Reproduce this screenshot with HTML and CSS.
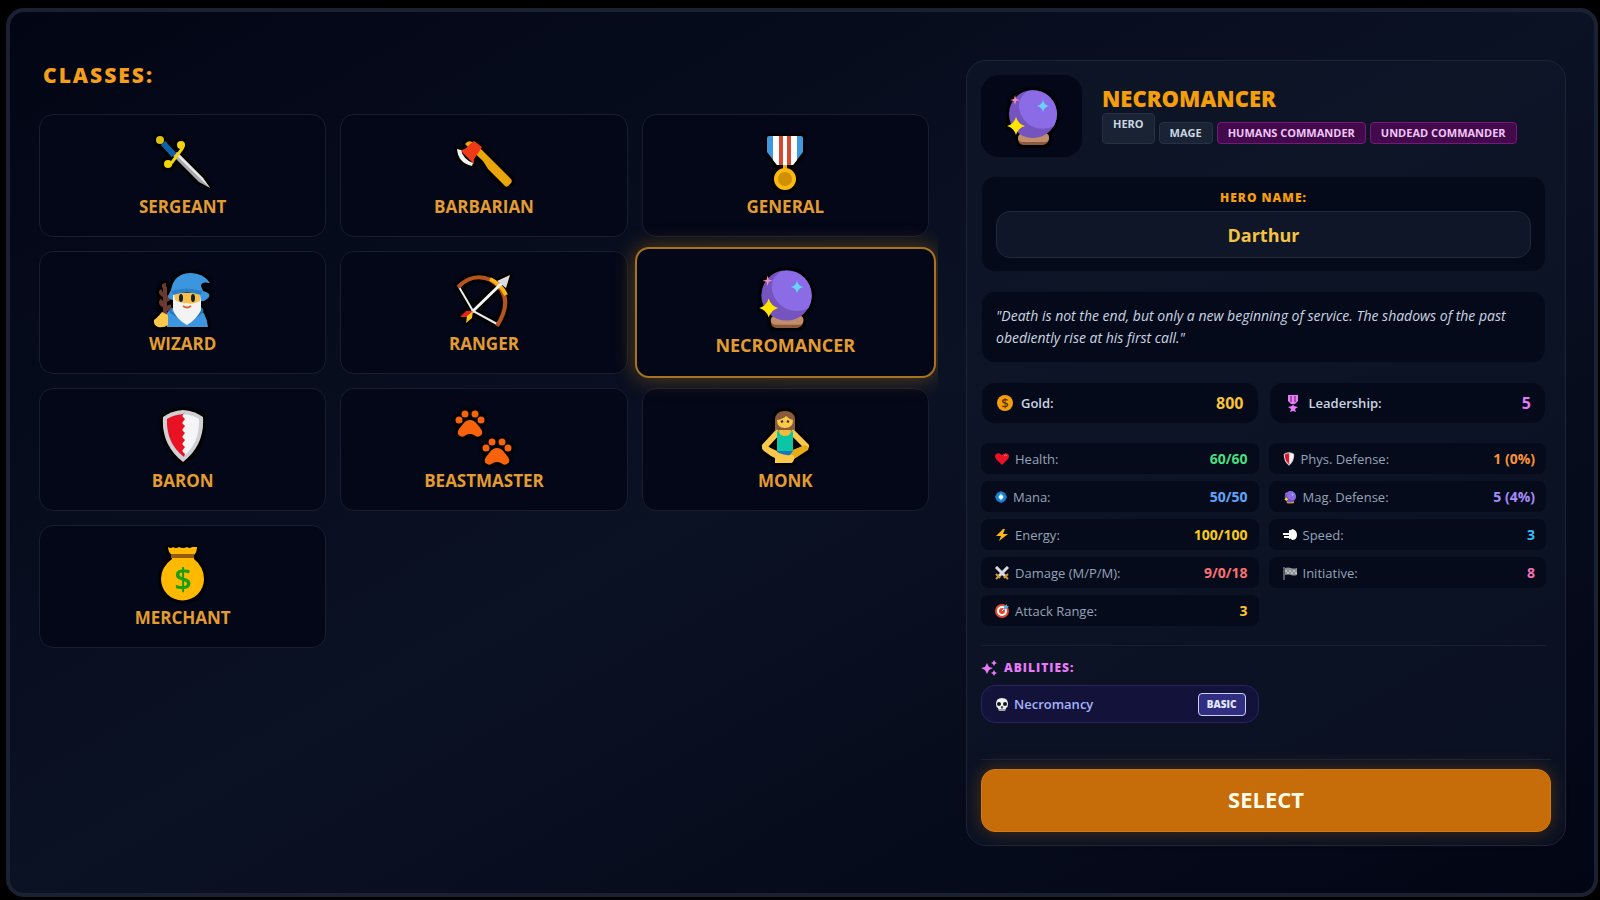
FILE: index.html
```html
<!DOCTYPE html>
<html lang="en">

<head>
    <meta charset="UTF-8">
    <meta name="viewport" content="width=device-width, initial-scale=1.0">
    <title>Choose your hero</title>
    <link rel="stylesheet" href="styles.css">
</head>

<body>
    <!-- icons used more than once -->
    <svg class="sprite" aria-hidden="true">
        <symbol id="ball" viewBox="0 0 60 60">
            <path d="M20 47h23q5 1 4 6t-6 6H21q-5-1-5-6t4-6z" fill="#8b5a3c" />
            <path d="M20 47h23q4 1 4 5t-4 4H20q-4-1-4-4t4-5z" fill="#c28d6c" />
            <circle cx="31" cy="28" r="24" fill="#7554c0" />
            <path d="M26 5a24 24 0 0 1 26 35A24 24 0 0 1 17 22Q16 11 26 5z" fill="#8b6ce6" />
            <path d="M13 9l1 4 4 1-4 1-1 4-1-4-4-1 4-1z" fill="#f58fb8" />
            <path d="M41 14q1 5 6 6-5 1-6 6-1-5-6-6 5-1 6-6z" fill="#66d4ff" />
            <path d="M14 31q2 7 9 9-7 2-9 9-2-7-9-9 7-2 9-9z" fill="#ffe600" />
        </symbol>
        <symbol id="shield" viewBox="0 0 60 60">
            <path d="M30 5q12 1 20 7 2 28-20 45Q8 40 10 12q8-6 20-7z" fill="#cfcfd4" />
            <path d="M30 9q10 1 16 5 1 24-16 38z" fill="#f5f5f7" />
            <path d="M30 9q-10 1-16 5-1 24 17 38l1-3-3-3 3-4-3-3 3-4-3-3 3-4-3-3 3-4-3-3 3-4-3-3 3-4z" fill="#e81224" />
        </symbol>
    </svg>

    <main class="shell">
        <section class="classes">
            <h1>Classes:</h1>
            <div class="class-list">
                <button class="card">
                    <svg viewBox="0 0 60 60">
                        <path d="M20 25l4-4 26 26 7 10-11-6z" fill="#a9a9ad" />
                        <path d="M24 21l26 26 7 10-34-33z" fill="#e8e8ea" />
                        <path d="M10 12l11 12" stroke="#0b63a8" stroke-width="6" />
                        <path d="M14 31q0 4 3 3l12-16q2-4-1-5" fill="none" stroke="#f2d40c" stroke-width="3" />
                        <circle cx="28" cy="14" r="4" fill="#f2d40c" />
                        <circle cx="15" cy="33" r="4" fill="#f2d40c" />
                        <circle cx="7" cy="9" r="4" fill="#dcbf10" />
                    </svg>
                    <span>Sergeant</span>
                </button>
                <button class="card">
                    <svg viewBox="0 0 60 60">
                        <path d="M11 13q3-4 7-2l10 8 12 12 17 17q2 3-1 5-3 4-5 2L34 38l-5-8-14-13z" fill="#eaa50c" />
                        <path d="M20 10l8 6-5 8q-4 3-3 9L6 19q6 0 9-5z" fill="#f03a17" />
                        <path d="M3 18l4 1q2 9 12 13l-1 3Q4 32 3 18z" fill="#f2f2f2" />
                    </svg>
                    <span>Barbarian</span>
                </button>
                <button class="card">
                    <svg viewBox="0 0 60 60">
                        <path d="M30 32v8" stroke="#f5a60c" stroke-width="4" />
                        <path d="M14 5h32q2 0 2 2v14L38 34H22L12 21V7q0-2 2-2z" fill="#3f97dd" />
                        <path d="M18 5h24v24l-4 5H22l-4-5z" fill="#fff" />
                        <path d="M26 5v29M34 5v29" stroke="#d6472f" stroke-width="4" />
                        <circle cx="30" cy="48" r="11" fill="#fdb90f" />
                        <circle cx="30" cy="48" r="7" fill="#d08f06" />
                    </svg>
                    <span>General</span>
                </button>
                <button class="card">
                    <svg viewBox="0 0 60 60">
                        <path d="M12 49V20q-3-3 1-3M12 28q-6-3-3-5M12 32q5 0 4-5M12 38q-6-2-3-6M12 42q5-1 4-5" fill="none" stroke="#6b3a2e" stroke-width="4" />
                        <path d="M14 59V45q4-6 12-6h18q9 4 11 20z" fill="#3c96df" />
                        <path d="M19 40q-3 3 0 5l9 6M48 40q3 3 0 5l-8 6" fill="none" stroke="#2370b8" stroke-width="2" />
                        <path d="M20 26h28v16q-4 9-14 15-11-6-14-15z" fill="#f3f3f3" />
                        <path d="M21 25h26v8q-8 4-13 2-6 1-12-3z" fill="#f7c04d" />
                        <ellipse cx="28" cy="30" rx="2" ry="4" fill="#16202a" />
                        <ellipse cx="40" cy="30" rx="2" ry="4" fill="#16202a" />
                        <path d="M30 38q4 3 8 0" fill="none" stroke="#e0603a" stroke-width="2" />
                        <path d="M15 28l3-6Q21 5 38 5q12 0 19 10-9-2-9 3l2 5q8 2 6 6-4 5-8 4l-1-7q-12-5-27 0v6q-5-1-5-4z" fill="#3c96df" />
                        <path d="M18 23q14-5 31 0l-1 4q-14-5-28 0z" fill="#2a80c8" />
                        <path d="M9 44l6 3v10q-4 3-10 2-5-2-4-7 3-2 8-8z" fill="#fbc94a" />
                    </svg>
                    <span>Wizard</span>
                </button>
                <button class="card">
                    <svg viewBox="0 0 60 60">
                        <path d="M5 19l14 24 24 13" fill="none" stroke="#ececec" stroke-width="2" />
                        <path d="M4 19Q19 4 37 12 62 28 43 58" fill="none" stroke="#b5541c" stroke-width="4" />
                        <path d="M36 11q11 5 16 16" fill="none" stroke="#fdb515" stroke-width="4" />
                        <path d="M18 44l31-30" stroke="#f6f6f6" stroke-width="3" />
                        <path d="M56 7l-4 13-9-7z" fill="#dcdcde" />
                        <path d="M6 49l6-6 7 0-4 6z" fill="#e5231b" />
                        <path d="M12 55l1-7 6-5-1 7z" fill="#fdc21a" />
                    </svg>
                    <span>Ranger</span>
                </button>
                <button class="card selected">
                    <svg><use href="#ball" /></svg>
                    <span>Necromancer</span>
                </button>
                <button class="card">
                    <svg><use href="#shield" /></svg>
                    <span>Baron</span>
                </button>
                <button class="card">
                    <svg viewBox="0 0 60 60">
                        <g id="paw" fill="#f7630c">
                            <path d="M16 15q4 0 7 4l4 5q3 5-1 7-3 2-6-1-4-2-8 0-3 3-6 1-4-2-1-7l4-5q3-4 7-4z" />
                            <circle cx="5" cy="15" r="3.5" />
                            <circle cx="11" cy="9" r="3.5" />
                            <circle cx="21" cy="9" r="3.5" />
                            <circle cx="27" cy="15" r="3.5" />
                        </g>
                        <use href="#paw" x="27" y="28" />
                    </svg>
                    <span>Beastmaster</span>
                </button>
                <button class="card">
                    <svg viewBox="0 0 60 60">
                        <path d="M20 25V14Q21 6 30 6t10 8v11z" fill="#8a5a3c" />
                        <path d="M22 28L10 41M38 28l13 13" stroke="#fbc94a" stroke-width="6" stroke-linecap="round" />
                        <path d="M50 40q5 1 3 5L36 56H22q-2-4 3-6z" fill="#e8ac18" />
                        <path d="M9 39q-4 4 0 7 12 10 28 12 4-5 1-8-14-1-29-11z" fill="#fbc94a" />
                        <path d="M20 51v7h17z" fill="#fbc94a" />
                        <path d="M22 26q8 3 16 0v20H22z" fill="#0bc5a4" />
                        <path d="M22 46h16l-3 4q-6 1-13-3z" fill="#1a76bd" />
                        <path d="M24 25h12q0 6-6 6t-6-6z" fill="#f3b93b" />
                        <path d="M22 15q6-1 9-4 3 3 7 4 0 8-8 8t-8-8z" fill="#fbc94a" />
                        <path d="M26 17l2-1M32 16l2 1" stroke="#3b2a20" stroke-width="2" />
                    </svg>
                    <span>Monk</span>
                </button>
                <button class="card">
                    <svg viewBox="0 0 60 60">
                        <path d="M15 5q3 2 5 0 3 2 6 0 4 2 8 0 3 2 5 0l5 0q0 5-3 8v4q10 8 10 20a21 21 0 0 1-43 0q0-12 11-20v-4q-4-3-4-8z" fill="#ffb900" />
                        <path d="M18 14h23" stroke="#935a12" stroke-width="4" />
                        <text x="30" y="48" text-anchor="middle" class="dollar">$</text>
                    </svg>
                    <span>Merchant</span>
                </button>
            </div>
        </section>

        <section class="details">
            <div class="details-body">
                <header class="hero-head">
                    <div class="portrait"><svg><use href="#ball" /></svg></div>
                    <div class="hero-title">
                        <h2>Necromancer</h2>
                        <div class="tags">
                            <span class="tag tag-hero">Hero</span>
                            <span class="tag">Mage</span>
                            <span class="tag tag-commander">Humans commander</span>
                            <span class="tag tag-commander">Undead commander</span>
                        </div>
                    </div>
                </header>

                <div class="box name-box">
                    <label for="hero-name">Hero name:</label>
                    <input id="hero-name" type="text" value="Darthur">
                </div>

                <p class="box quote">"Death is not the end, but only a new beginning of service. The shadows of the past obediently rise at his first call."</p>

                <div class="pair">
                    <div class="box resource">
                        <svg class="w18" viewBox="0 0 18 18">
                            <circle cx="9" cy="9" r="8" fill="#f59e0b" />
                            <text x="9" y="14" text-anchor="middle" class="coin">$</text>
                        </svg>
                        <span>Gold:</span>
                        <b class="c-gold">800</b>
                    </div>
                    <div class="box resource">
                        <svg class="w18" viewBox="0 0 18 18" fill="#e879f9">
                            <path d="M4 1h10v6l-3 3H7L4 7z" />
                            <path d="M7 2v6M11 2v6" stroke="#5b2267" />
                            <path d="M9 10l1 2 4 1-3 2 1 3-3-1-3 1 1-3-3-2 4-1z" />
                        </svg>
                        <span>Leadership:</span>
                        <b class="c-lead">5</b>
                    </div>
                </div>

                <div class="stats">
                    <div class="stat">
                        <svg class="w14" viewBox="0 0 14 14"><path d="M7 13L1 7Q-1 4 1 2q3-2 6 1 3-3 6-1 2 2 0 5z" fill="#e81224" /><path d="M9 4q2-2 3 0" stroke="#f77" fill="none" /></svg>
                        <span>Health:</span><b class="c-green">60/60</b>
                    </div>
                    <div class="stat">
                        <svg class="w12" viewBox="1 0 12 14"><path d="M7 1l4 2 2 4-2 4-4 2-4-2-2-4 2-4z" fill="#1b7fd0" /><path d="M7 3l3 4-3 4-3-4z" fill="#6cc4f7" /><circle cx="7" cy="7" r="2" fill="#fff" /></svg>
                        <span>Mana:</span><b class="c-blue">50/50</b>
                    </div>
                    <div class="stat">
                        <svg class="w14" viewBox="0 0 14 14"><path d="M8 1L1 8h5l-2 5 9-7H8l2-5z" fill="#fdb71c" /></svg>
                        <span>Energy:</span><b class="c-yellow">100/100</b>
                    </div>
                    <div class="stat">
                        <svg class="w14" viewBox="0 0 14 14"><path d="M1 1l9 9M13 1l-9 9" stroke="#dcdce0" stroke-width="3" /><path d="M1 8l4 4M13 8l-4 4M1 13l3-3M13 13l-3-3" stroke="#d29a2e" stroke-width="2" /></svg>
                        <span>Damage (M/P/M):</span><b class="c-red">9/0/18</b>
                    </div>
                    <div class="stat">
                        <svg class="w14" viewBox="0 0 14 14"><circle cx="7" cy="7" r="7" fill="#e2472f" /><circle cx="7" cy="7" r="5" fill="#fff" /><circle cx="7" cy="7" r="3" fill="#e2472f" /><path d="M7 7l4-4" stroke="#fff" /><path d="M9 3l3-3v2h2l-3 3H9z" fill="#41b3f0" /></svg>
                        <span>Attack Range:</span><b class="c-gold">3</b>
                    </div>
                    <div class="stat">
                        <svg class="w12" viewBox="9 4 42 54"><use href="#shield" width="60" height="60" /></svg>
                        <span>Phys. Defense:</span><b class="c-orange">1 (0%)</b>
                    </div>
                    <div class="stat">
                        <svg class="w14"><use href="#ball" /></svg>
                        <span>Mag. Defense:</span><b class="c-violet">5 (4%)</b>
                    </div>
                    <div class="stat">
                        <svg class="w14" viewBox="0 0 14 14"><path d="M0 6h7M1 9h6" stroke="#f5f5f5" stroke-width="2" /><path d="M6 2q2 1 3-1 5 1 5 6t-5 5q-1-2-3-1z" fill="#fff" /></svg>
                        <span>Speed:</span><b class="c-sky">3</b>
                    </div>
                    <div class="stat">
                        <svg class="w14" viewBox="0 0 14 14"><path d="M1 1v13" stroke="#55585e" stroke-width="2" /><path d="M2 2q3-1 6 0t6 0v7q-3 1-6 0T2 9z" fill="#8d9093" /><path d="M2 4h2v2H2zM6 4h2v2H6zM10 4h2v2h-2zM4 6h2v2H4zM8 6h2v2H8zM12 6h2v2h-2z" fill="#b9bcc0" /></svg>
                        <span>Initiative:</span><b class="c-pink">8</b>
                    </div>
                </div>

                <div class="abilities">
                    <h3>
                        <svg class="w16" viewBox="0 0 16 16" fill="#e879f9"><path d="M6 3l2 4 4 1-4 2-2 4-2-4-4-2 4-1zM13 0l1 2 2 1-2 1-1 2-1-2-2-1 2-1zM13 10l1 2 2 1-2 1-1 2-1-2-2-1 2-1z" /></svg>
                        Abilities:
                    </h3>
                    <div class="pair">
                        <div class="ability">
                            <svg class="w12" viewBox="0 0 12 14"><path d="M6 1q6 0 6 6 0 3-2 4l-1 3H3l-1-3Q0 10 0 7q0-6 6-6z" fill="#f2f2f2" /><circle cx="3" cy="7" r="2" fill="#15151c" /><circle cx="9" cy="7" r="2" fill="#15151c" /><path d="M6 9l1 2H5zM4 12v2M6 12v2M8 12v2" stroke="#55555c" /></svg>
                            <span>Necromancy</span>
                            <b class="level">Basic</b>
                        </div>
                    </div>
                </div>
            </div>

            <footer>
                <button class="select">Select</button>
            </footer>
        </section>
    </main>
</body>

</html>
```
FILE: styles.css
```css
* {
    box-sizing: border-box;
}

body {
    margin: 0;
    padding: 8px 2px 3px 6px;
    height: 100vh;
    background: #000;
    color: #cbd5e1;
    font-family: "Open Sans", "Noto Sans", sans-serif;
    font-size: 13px;
}

h1, h2, h3, p {
    margin: 0;
}

button, input {
    font-family: inherit;
}

svg {
    display: block;
    flex: none;
}

.sprite {
    position: absolute;
    width: 0;
    height: 0;
}

.shell {
    display: grid;
    grid-template-columns: 3fr 2fr;
    gap: 28px;
    height: 100%;
    padding: 48px 28px 47px;
    border: 4px solid #1a2130;
    border-radius: 18px;
    background: linear-gradient(to bottom right, #020514, #0b1224 50%, #020514);
}

/* left side */
.classes {
    display: flex;
    flex-direction: column;
    min-width: 0;
    min-height: 0;
}

h1 {
    padding: 0 5px;
    color: #f59e1b;
    font-size: 21px;
    font-weight: 800;
    line-height: 31px;
    letter-spacing: 2px;
    text-transform: uppercase;
}

.class-list {
    flex: 1;
    display: grid;
    grid-template-columns: repeat(3, 1fr);
    align-content: start;
    gap: 14px;
    padding: 23px 9px 22px 1px;
    overflow: hidden;
}

.card {
    display: flex;
    flex-direction: column;
    align-items: center;
    gap: 4px;
    height: 123px;
    padding: 16px;
    border: 1px solid #171e2d;
    border-radius: 14px;
    background: #030718;
    color: #e39c30;
    font-size: 17px;
    font-weight: 700;
    line-height: 24px;
    text-transform: uppercase;
    cursor: pointer;
}

/* stacked shadows make the thick black outline */
.card svg,
.portrait svg {
    width: 60px;
    height: 60px;
    overflow: visible;
    filter: drop-shadow(2px 0 0 #000) drop-shadow(-2px 0 0 #000) drop-shadow(0 2px 0 #000) drop-shadow(0 -2px 0 #000) drop-shadow(0 0 1px #000);
}

.card.selected {
    height: 131px;
    margin: -4px -7px;
    padding: 17px;
    border: 2px solid #a87320;
    box-shadow: 0 0 22px rgba(245, 158, 11, 0.35);
    font-size: 18px;
    z-index: 1;
}

.card.selected svg {
    width: 63px;
    height: 63px;
}

.dollar {
    fill: #16a010;
    font-size: 31px;
    font-weight: 600;
}

/* right side */
.details {
    display: flex;
    flex-direction: column;
    min-width: 0;
    min-height: 0;
    padding: 14px 14px 13px;
    border: 1px solid #1c2535;
    border-radius: 20px;
    background: rgba(15, 23, 42, 0.6);
}

.details-body {
    flex: 1;
    display: flex;
    flex-direction: column;
    gap: 19px;
    padding-right: 5px;
}

.hero-head {
    display: flex;
    align-items: center;
    gap: 20px;
}

.portrait {
    display: flex;
    align-items: center;
    justify-content: center;
    width: 101px;
    height: 82px;
    border-radius: 18px;
    background: #040717;
}

.hero-title {
    padding-bottom: 6px;
}

h2 {
    color: #f59e0b;
    font-size: 22px;
    font-weight: 800;
    line-height: 30px;
    text-transform: uppercase;
}

.tags {
    display: flex;
    gap: 4px;
}

.tag {
    margin-top: 9px;
    padding: 0 10px;
    border: 1px solid #263144;
    border-radius: 4px;
    background: #1a2334;
    color: #cbd5e1;
    font-size: 11px;
    font-weight: 700;
    line-height: 20px;
    text-transform: uppercase;
    white-space: nowrap;
}

.tag-hero {
    margin-top: 0;
}

.tag-commander {
    border-color: #76187e;
    background: #430a4b;
    color: #f0c4f8;
}

.box {
    border: 1px solid #0c1323;
    border-radius: 14px;
    background: #050a1b;
}

.name-box {
    padding: 12px 14px 13px;
    text-align: center;
}

.name-box label {
    display: block;
    margin-bottom: 4px;
    color: #f59e0b;
    font-size: 12px;
    font-weight: 800;
    line-height: 18px;
    letter-spacing: 1px;
    text-transform: uppercase;
}

.name-box input {
    display: block;
    width: 100%;
    height: 47px;
    border: 1px solid #1e293b;
    border-radius: 14px;
    background: #0e1627;
    color: #f5c343;
    font-size: 18px;
    font-weight: 700;
    text-align: center;
}

.quote {
    padding: 13px 14px;
    font-size: 14px;
    font-style: italic;
    line-height: 22px;
}

.pair {
    display: grid;
    grid-template-columns: 1fr 1fr;
    gap: 10px;
}

.resource {
    display: flex;
    align-items: center;
    gap: 7px;
    height: 42px;
    padding: 0 14px;
    font-size: 13px;
    font-weight: 600;
}

.resource b {
    margin-left: auto;
    font-size: 16px;
    font-weight: 700;
}

.coin {
    fill: #5c3603;
    font-size: 13px;
    font-weight: 600;
}

.stats {
    display: grid;
    grid-template-columns: 1fr 1fr;
    grid-template-rows: repeat(5, 31px);
    grid-auto-flow: column;
    gap: 7px 10px;
}

.stat {
    display: flex;
    align-items: center;
    gap: 6px;
    padding: 0 11px 0 14px;
    border-radius: 8px;
    background: #060b1b;
    color: #94a3b8;
}

.stat b {
    margin-left: auto;
    font-size: 14px;
}

.w12 {
    width: 12px;
    height: 14px;
}

.w14 {
    width: 14px;
    height: 14px;
}

.w16 {
    width: 16px;
    height: 16px;
}

.w18 {
    width: 18px;
    height: 18px;
}

.c-gold { color: #fbc331; }
.c-lead { color: #e879f9; }
.c-green { color: #4ade80; }
.c-blue { color: #60a5fa; }
.c-yellow { color: #facc15; }
.c-red { color: #f87171; }
.c-orange { color: #fb923c; }
.c-violet { color: #a78bfa; }
.c-sky { color: #38bdf8; }
.c-pink { color: #f472b6; }

.abilities {
    padding-top: 13px;
    border-top: 1px solid #172032;
}

h3 {
    display: flex;
    align-items: center;
    gap: 7px;
    margin-bottom: 8px;
    color: #e879f9;
    font-size: 12px;
    font-weight: 800;
    line-height: 18px;
    letter-spacing: 1px;
    text-transform: uppercase;
}

.ability {
    display: flex;
    align-items: center;
    gap: 6px;
    height: 38px;
    padding: 0 12px 0 14px;
    border: 1px solid #28245e;
    border-radius: 14px;
    background: #13123a;
    color: #a5b4fc;
    font-weight: 600;
}

.level {
    margin-left: auto;
    padding: 0 8px;
    border: 1px solid #c7d2fe;
    border-radius: 4px;
    background: #312e81;
    color: #e0e7ff;
    font-size: 10px;
    line-height: 21px;
    text-transform: uppercase;
}

footer {
    padding-top: 9px;
    border-top: 1px solid #172032;
}

.select {
    display: block;
    width: 100%;
    height: 63px;
    padding: 0 0 3px;
    border: 1px solid #d07a10;
    border-radius: 14px;
    background: #c66c08;
    box-shadow: 0 0 18px rgba(217, 119, 6, 0.3);
    color: #fffbeb;
    font-size: 22px;
    font-weight: 700;
    text-transform: uppercase;
    cursor: pointer;
}
```
